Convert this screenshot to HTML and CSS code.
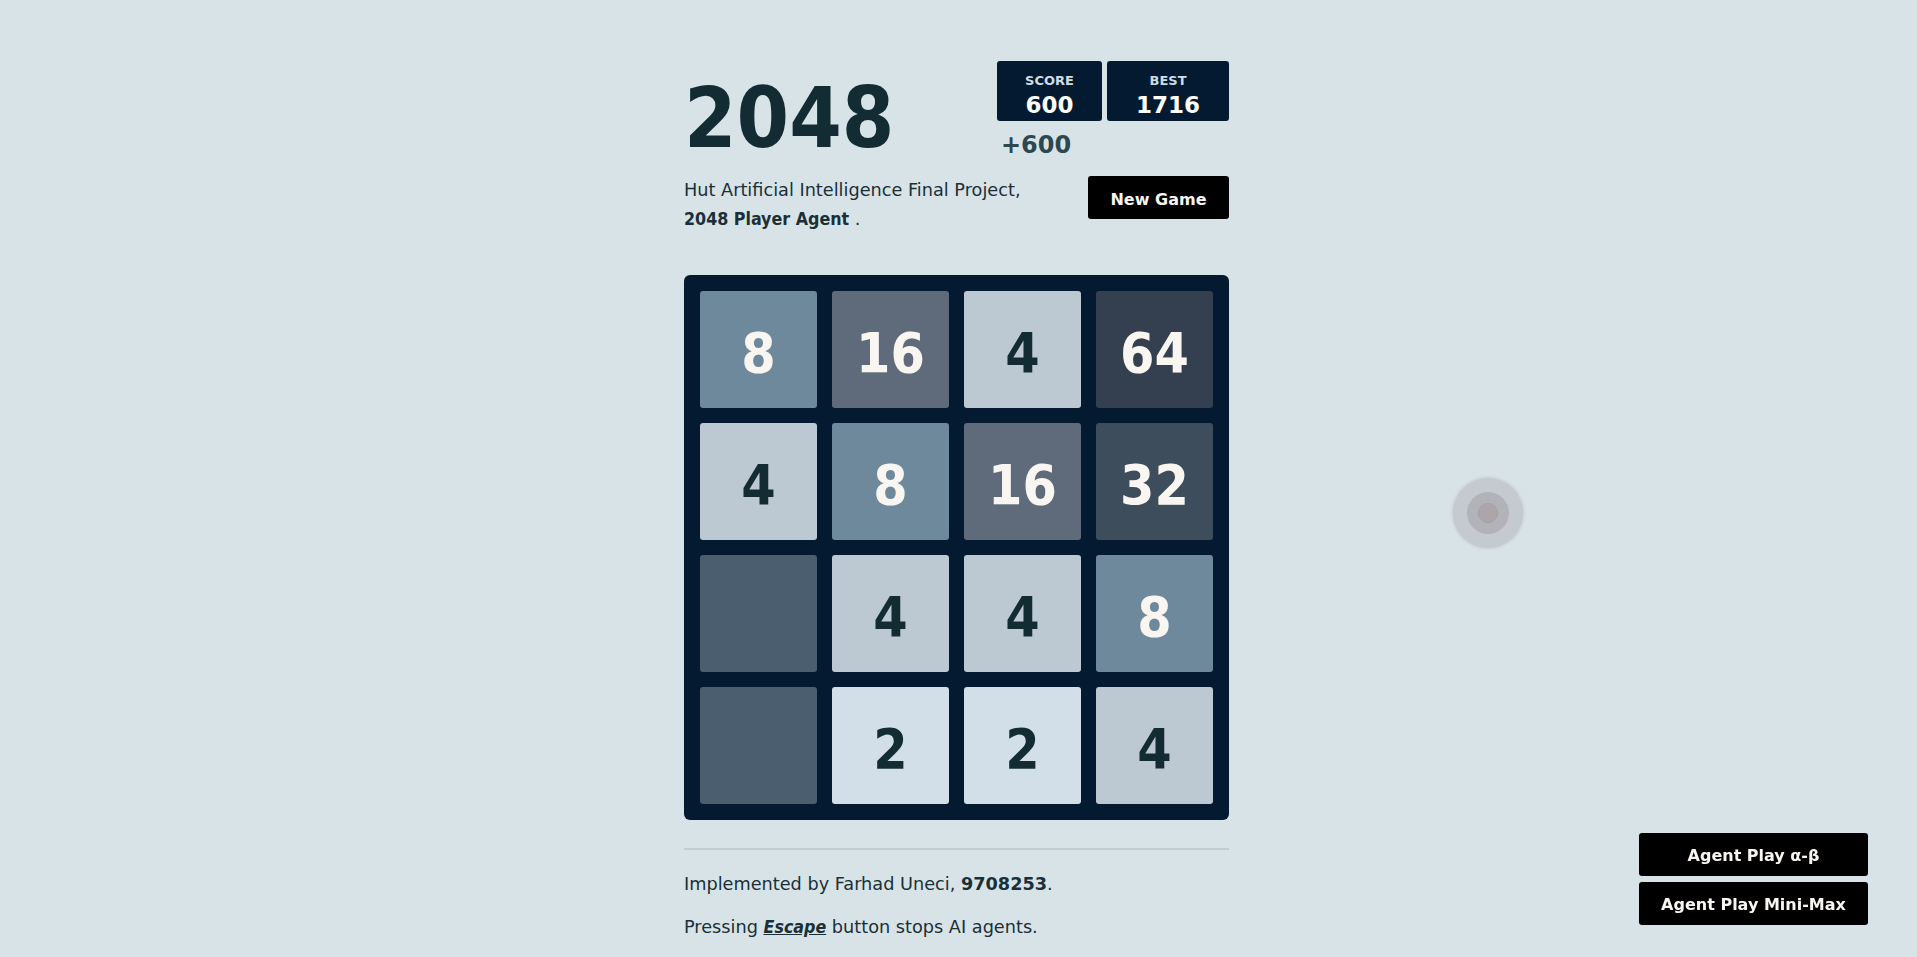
FILE: index.html
```html
<!DOCTYPE html>
<html lang="en">
<head>
<meta charset="utf-8">
<title>2048</title>
<link rel="stylesheet" href="styles.css">
</head>
<body>
<div class="container">
  <div class="heading">
    <h1 class="title">2048</h1>
    <div class="scores-wrap">
      <div class="scores">
        <div class="score-box score"><div class="label">SCORE</div><div class="value">600</div></div>
        <div class="score-box best"><div class="label">BEST</div><div class="value">1716</div></div>
      </div>
      <div class="plus">+600</div>
    </div>
  </div>
  <div class="above-game">
    <p class="intro">Hut Artificial Intelligence Final Project,<br><strong class="narrow">2048 Player Agent</strong> .</p>
    <button class="btn new-game">New Game</button>
  </div>
  <div class="board">
    <div class="tile t8">8</div>
    <div class="tile t16">16</div>
    <div class="tile t4">4</div>
    <div class="tile t64">64</div>
    <div class="tile t4">4</div>
    <div class="tile t8">8</div>
    <div class="tile t16">16</div>
    <div class="tile t32">32</div>
    <div class="tile empty"></div>
    <div class="tile t4">4</div>
    <div class="tile t4">4</div>
    <div class="tile t8">8</div>
    <div class="tile empty"></div>
    <div class="tile t2">2</div>
    <div class="tile t2">2</div>
    <div class="tile t4">4</div>
  </div>
  <hr class="rule">
  <p class="note">Implemented by Farhad Uneci, <strong>9708253</strong>.</p>
  <p class="note">Pressing <strong class="narrow"><em><u>Escape</u></em></strong> button stops AI agents.</p>
</div>
<div class="agents">
  <button class="btn agent">Agent Play α-β</button>
  <button class="btn agent">Agent Play Mini-Max</button>
</div>
<div class="touch"><div class="touch-mid"><div class="touch-in"></div></div></div>
</body>
</html>
```
FILE: styles.css
```css
html, body {
  margin: 0;
  padding: 0;
}
body {
  background: #d8e3e8;
  font-family: "DejaVu Sans", sans-serif;
  font-size: 18px;
  color: #1a2f37;
  padding-right: 4px;
  min-height: 957px;
  overflow: hidden;
}
.container {
  width: 545px;
  margin: 0 auto;
  padding-top: 61px;
}
.heading {
  display: flex;
  justify-content: space-between;
  align-items: flex-start;
  height: 114px;
}
.title {
  margin: 15px 0 0 0;
  font-size: 84px;
  font-weight: bold;
  font-stretch: condensed;
  line-height: 84px;
  color: #132b33;
}
.scores-wrap {
  display: flex;
  flex-direction: column;
  align-items: flex-start;
}
.scores {
  display: flex;
  gap: 5px;
}
.score-box {
  background: #031a30;
  border-radius: 3px;
  height: 60px;
  box-sizing: border-box;
  padding-top: 13px;
  text-align: center;
  color: #ffffff;
}
.score { width: 105px; }
.best { width: 122px; }
.label {
  font-size: 13px;
  line-height: 13px;
  font-weight: bold;
  color: #d0dce6;
}
.value {
  font-size: 23px;
  line-height: 23px;
  font-weight: bold;
  margin-top: 7px;
}
.plus {
  margin: 12px 0 0 4px;
  font-size: 24px;
  line-height: 25px;
  font-weight: bold;
  color: #2c474f;
}
.above-game {
  display: flex;
  justify-content: space-between;
  align-items: flex-start;
  margin-top: 1px;
}
.intro {
  margin: 0;
  line-height: 1.65;
  font-size: 17.7px;
}
.narrow {
  font-stretch: condensed;
}
.btn {
  border: none;
  background: #000;
  color: #f9f6f2;
  font-family: "DejaVu Sans", sans-serif;
  font-weight: bold;
  font-size: 16px;
  border-radius: 3px;
  cursor: pointer;
  padding: 0;
}
.new-game {
  width: 141px;
  height: 43px;
  padding-top: 3px;
}
.board {
  margin-top: 41px;
  background: #031a30;
  border-radius: 6px;
  padding: 16px;
  display: grid;
  grid-template-columns: repeat(4, 117px);
  grid-auto-rows: 117px;
  gap: 15px;
}
.tile {
  border-radius: 3px;
  display: flex;
  align-items: center;
  justify-content: center;
  box-sizing: border-box;
  padding-top: 6px;
  font-size: 55px;
  font-weight: bold;
  font-stretch: condensed;
  color: #f9f6f2;
}
.empty { background: #4b5e6f; }
.t2 { background: #d2dfe8; color: #132b33; }
.t4 { background: #bdc9d2; color: #132b33; }
.t8 { background: #6e899b; }
.t16 { background: #5f6a7a; }
.t32 { background: #3e4d5b; }
.t64 { background: #343f50; }
.rule {
  margin: 28px 0 20px;
  border: none;
  border-top: 2px solid #c3cdd0;
  height: 0;
}
.note {
  margin: 0 0 13px;
  line-height: 1.65;
  font-size: 17.7px;
}
.agents {
  position: fixed;
  right: 49px;
  bottom: 32px;
  display: flex;
  flex-direction: column;
  gap: 6px;
}
.agent {
  width: 229px;
  height: 43px;
  padding-top: 2px;
}
.touch {
  position: absolute;
  left: 1453px;
  top: 478px;
  width: 70px;
  height: 70px;
  border-radius: 50%;
  background: #c4cacf;
  box-shadow: 0 0 3px 1px #c8cdd2;
  display: flex;
  align-items: center;
  justify-content: center;
}
.touch-mid {
  width: 42px;
  height: 42px;
  border-radius: 50%;
  background: #b1b3b9;
  display: flex;
  align-items: center;
  justify-content: center;
}
.touch-in {
  width: 18px;
  height: 18px;
  border-radius: 50%;
  background: #aca6ab;
  border: 1px solid #a39ea3;
}
```
